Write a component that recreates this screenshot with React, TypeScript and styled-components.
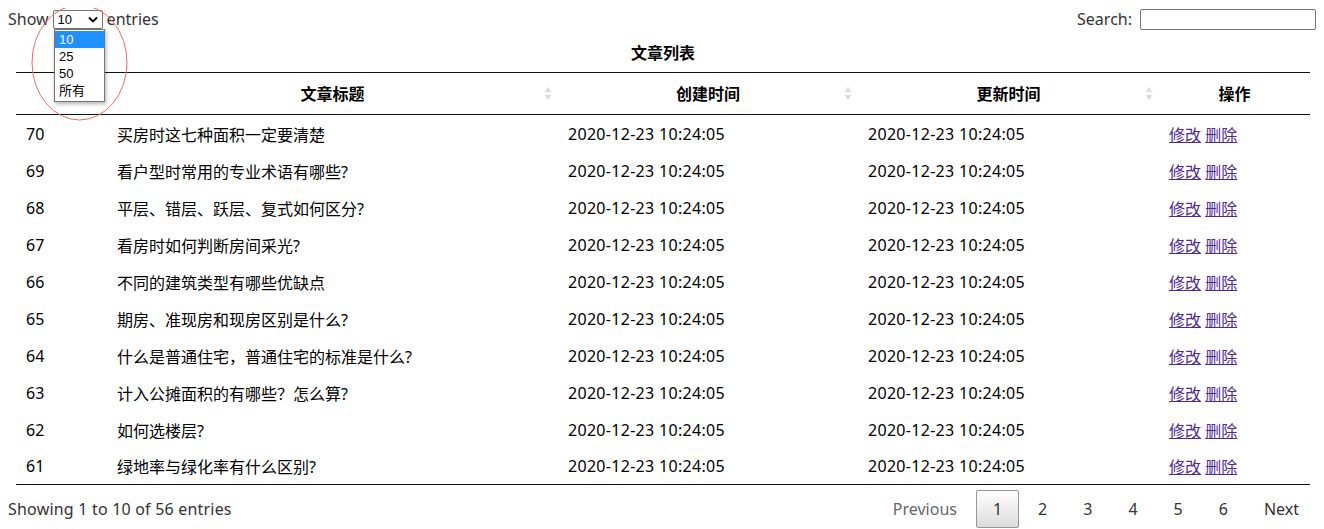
import React from 'react'
import styled, { createGlobalStyle } from 'styled-components'

const GlobalStyle = createGlobalStyle`
  body {
    margin: 8px;
    font-family: "Noto Sans", "Noto Sans CJK SC", sans-serif;
    font-size: 16px;
    color: #333;
    background: #fff;
  }
`

const rows = [
  { id: 70, title: '买房时这七种面积一定要清楚' },
  { id: 69, title: '看户型时常用的专业术语有哪些?' },
  { id: 68, title: '平层、错层、跃层、复式如何区分?' },
  { id: 67, title: '看房时如何判断房间采光?' },
  { id: 66, title: '不同的建筑类型有哪些优缺点' },
  { id: 65, title: '期房、准现房和现房区别是什么?' },
  { id: 64, title: '什么是普通住宅，普通住宅的标准是什么?' },
  { id: 63, title: '计入公摊面积的有哪些？怎么算?' },
  { id: 62, title: '如何选楼层?' },
  { id: 61, title: '绿地率与绿化率有什么区别?' },
]

const stamp = '2020-12-23 10:24:05'

const SortIcon = () => (
  <SortMark width="8" height="15" viewBox="0 0 8 15">
    <path d="M4 1 L7.5 6 L0.5 6 Z" fill="#dcdcdc" />
    <path d="M4 14 L7.5 9 L0.5 9 Z" fill="#dcdcdc" />
  </SortMark>
)

const App = () => {
  return (
    <>
      <GlobalStyle />
      <Wrapper>
        <TopBar>
          <Length>
            Show
            <FakeSelect>
              <span>10</span>
              <svg width="10" height="7" viewBox="0 0 10 7">
                <path d="M1 1.5 L5 5.5 L9 1.5" fill="none" stroke="#000" strokeWidth="1.8" />
              </svg>
            </FakeSelect>
            entries
          </Length>
          <Filter>
            Search:
            <SearchInput type="text" />
          </Filter>
        </TopBar>

        <Table>
          <Caption>文章列表</Caption>
          <colgroup>
            <col style={{ width: 91 }} />
            <col style={{ width: 451 }} />
            <col style={{ width: 300 }} />
            <col style={{ width: 301 }} />
            <col style={{ width: 151 }} />
          </colgroup>
          <thead>
            <tr>
              <Th></Th>
              <Th>文章标题<SortIcon /></Th>
              <Th>创建时间<SortIcon /></Th>
              <Th>更新时间<SortIcon /></Th>
              <Th>操作</Th>
            </tr>
          </thead>
          <tbody>
            {rows.map(r => (
              <tr key={r.id}>
                <Td>{r.id}</Td>
                <Td>{r.title}</Td>
                <Td $num>{stamp}</Td>
                <Td $num>{stamp}</Td>
                <Td>
                  <Action href="#">修改</Action> <Action href="#">删除</Action>
                </Td>
              </tr>
            ))}
          </tbody>
        </Table>

        <Footer>
          <Info>Showing 1 to 10 of 56 entries</Info>
          <Paginate>
            <PageButton $disabled>Previous</PageButton>
            <PageButton $current>1</PageButton>
            <PageButton>2</PageButton>
            <PageButton>3</PageButton>
            <PageButton>4</PageButton>
            <PageButton>5</PageButton>
            <PageButton>6</PageButton>
            <PageButton>Next</PageButton>
          </Paginate>
        </Footer>

        <DropList>
          <DropItem $active>10</DropItem>
          <DropItem>25</DropItem>
          <DropItem>50</DropItem>
          <DropItem>所有</DropItem>
        </DropList>

        <Marker width="99" height="119" viewBox="0 0 99 119">
          <ellipse cx="49.5" cy="59.5" rx="47.5" ry="57.5" fill="none" stroke="#f06a6a" strokeWidth="1" />
        </Marker>
      </Wrapper>
    </>
  )
}

export default App

const Wrapper = styled.div`
  position: relative;
  width: 1308px;
`

const TopBar = styled.div`
  display: flex;
  justify-content: space-between;
  align-items: center;
  height: 22px;
`

const Length = styled.div`
  display: flex;
  align-items: center;
  gap: 4px;
  color: #333;
`

const FakeSelect = styled.div`
  display: flex;
  align-items: center;
  justify-content: space-between;
  box-sizing: border-box;
  width: 50px;
  height: 19px;
  margin-top: 1px;
  padding: 0 4px 0 4px;
  border: 1px solid #767676;
  border-radius: 2px;
  font-family: "Liberation Sans", Arial, sans-serif;
  font-size: 13px;
  color: #000;
  background: #fff;
`

const Filter = styled.label`
  display: flex;
  align-items: center;
  gap: 7px;
  color: #333;
`

const SearchInput = styled.input`
  box-sizing: border-box;
  width: 176px;
  height: 21px;
  border: 1px solid #767676;
  border-radius: 2px;
  padding: 0 4px;
  margin: 0 0 0 1px;
  background: #fff;
`

const Table = styled.table`
  width: 1294px;
  margin-left: 8px;
  border-collapse: collapse;
  table-layout: fixed;
  color: #000;
`

const Caption = styled.caption`
  height: 42px;
  line-height: 42px;
  font-weight: bold;
  font-size: 16px;
  padding-top: 2px;
  box-sizing: border-box;
`

const Th = styled.th`
  position: relative;
  height: 42px;
  box-sizing: border-box;
  padding: 0 14px 1px;
  border-top: 1px solid #111;
  border-bottom: 1px solid #111;
  font-weight: bold;
  text-align: center;
`

const SortMark = styled.svg`
  position: absolute;
  right: 6px;
  top: 13px;
`

const Td = styled.td<{ $num?: boolean }>`
  height: 37px;
  box-sizing: border-box;
  padding: 1px 10px 0;
  white-space: nowrap;
  letter-spacing: ${p => (p.$num ? '0.3px' : 'normal')};
  tr:last-child > & {
    border-bottom: 1px solid #111;
  }
`

const Action = styled.a`
  color: #4f2a94;
  text-decoration: underline;
`

const Footer = styled.div`
  display: flex;
  justify-content: space-between;
  align-items: center;
  padding-top: 5px;
`

const Info = styled.div`
  color: #333;
  letter-spacing: 0.2px;
`

const Paginate = styled.div`
  display: flex;
  align-items: center;
`

const PageButton = styled.span<{ $current?: boolean; $disabled?: boolean }>`
  box-sizing: border-box;
  min-width: 1.5em;
  padding: 0.5em 1em;
  margin-left: 2px;
  line-height: 20px;
  text-align: center;
  border: 1px solid ${p => (p.$current ? '#979797' : 'transparent')};
  border-radius: 2px;
  color: ${p => (p.$disabled ? '#666' : '#333')};
  background: ${p => (p.$current ? 'linear-gradient(to bottom, #fff 0%, #dcdcdc 100%)' : 'transparent')};
  cursor: ${p => (p.$disabled ? 'default' : 'pointer')};
`

const DropList = styled.div`
  position: absolute;
  left: 46px;
  top: 21px;
  width: 51px;
  box-sizing: border-box;
  border: 1px solid #767676;
  background: #fff;
  box-shadow: 1px 2px 4px rgba(0, 0, 0, 0.3);
  font-family: "Liberation Sans", Arial, "Noto Sans CJK SC", sans-serif;
  font-size: 13px;
  color: #000;
  padding: 1px 0 2px;
`

const DropItem = styled.div<{ $active?: boolean }>`
  height: 17px;
  line-height: 17px;
  padding-left: 4px;
  background: ${p => (p.$active ? '#1e90ff' : '#fff')};
  color: ${p => (p.$active ? '#fff' : '#000')};
`

const Marker = styled.svg`
  position: absolute;
  left: 22px;
  top: -5px;
  pointer-events: none;
`
